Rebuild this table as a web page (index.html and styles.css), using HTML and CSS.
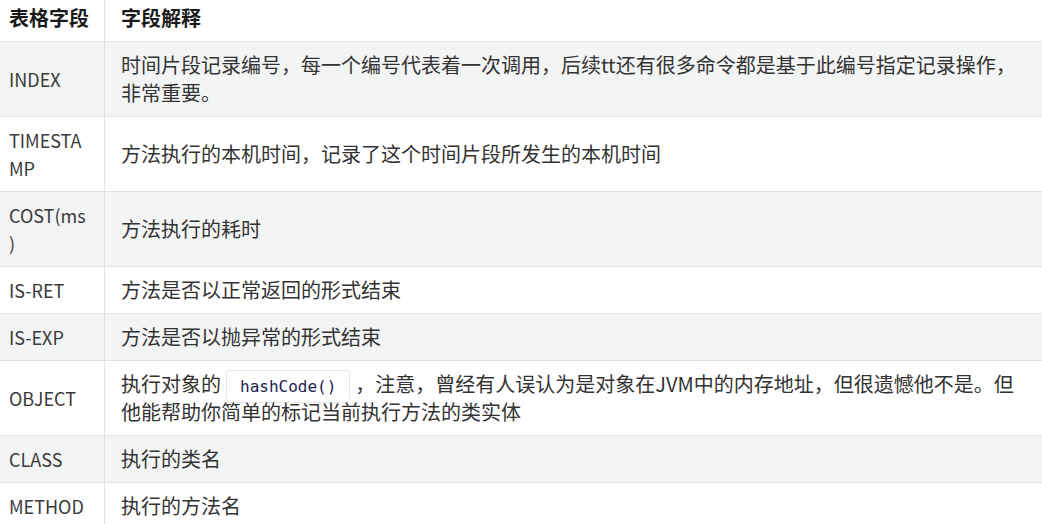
FILE: index.html
```html
<html lang="zh-CN"><head>
    <title>tt 字段说明</title>
<link rel="stylesheet" href="styles.css">
</head>

<body>
    <table class="fields">
        <colgroup>
            <col class="name">
            <col class="desc">
        </colgroup>
        <thead>
            <tr>
                <th>表格字段</th>
                <th>字段解释</th>
            </tr>
        </thead>
        <tbody>
            <tr>
                <td>INDEX</td>
                <td>时间片段记录编号，每一个编号代表着一次调用，后续tt还有很多命令都是基于此编号指定记录操作，非常重要。</td>
            </tr>
            <tr>
                <td>TIMESTAMP</td>
                <td>方法执行的本机时间，记录了这个时间片段所发生的本机时间</td>
            </tr>
            <tr>
                <td>COST(ms)</td>
                <td>方法执行的耗时</td>
            </tr>
            <tr>
                <td>IS-RET</td>
                <td>方法是否以正常返回的形式结束</td>
            </tr>
            <tr>
                <td>IS-EXP</td>
                <td>方法是否以抛异常的形式结束</td>
            </tr>
            <tr>
                <td>OBJECT</td>
                <td>执行对象的<code>hashCode()</code>，注意，曾经有人误认为是对象在JVM中的内存地址，但很遗憾他不是。但他能帮助你简单的标记当前执行方法的类实体</td>
            </tr>
            <tr>
                <td>CLASS</td>
                <td>执行的类名</td>
            </tr>
            <tr>
                <td>METHOD</td>
                <td>执行的方法名</td>
            </tr>
        </tbody>
    </table>
</body></html>
```

FILE: styles.css
```css
body {
    margin: 0;
    overflow: hidden;
    background-color: #ffffff;
    font-family: "Noto Sans CJK SC", sans-serif;
    color: #333333;
}
table.fields {
    border-collapse: collapse;
    table-layout: fixed;
    width: 1056px;
    margin: -5px 0 0 -8px;
    font-size: 20px;
    line-height: 28px;
}
col.name {
    width: 112px;
}
.fields th,
.fields td {
    text-align: left;
    vertical-align: middle;
    padding: 9px 15px 9px 16px;
    border: 1px solid #e4e4e4;
    word-break: break-all;
}
.fields td:first-child {
    font-size: 18px;
    color: #3a3a3a;
    line-break: anywhere;
}
.fields th {
    font-weight: bold;
    color: #1a1a1a;
    border-top: none;
    white-space: nowrap;
}
.fields tbody tr:nth-child(odd) {
    background-color: #f3f4f4;
}
.fields code {
    font-family: "DejaVu Sans Mono", monospace;
    font-size: 16px;
    line-height: 1;
    color: #1c1c54;
    background-color: #ffffff;
    border: 1px solid #e6e6e6;
    border-radius: 4px;
    padding: 6px 13px;
    margin: 0 5px;
}
```
